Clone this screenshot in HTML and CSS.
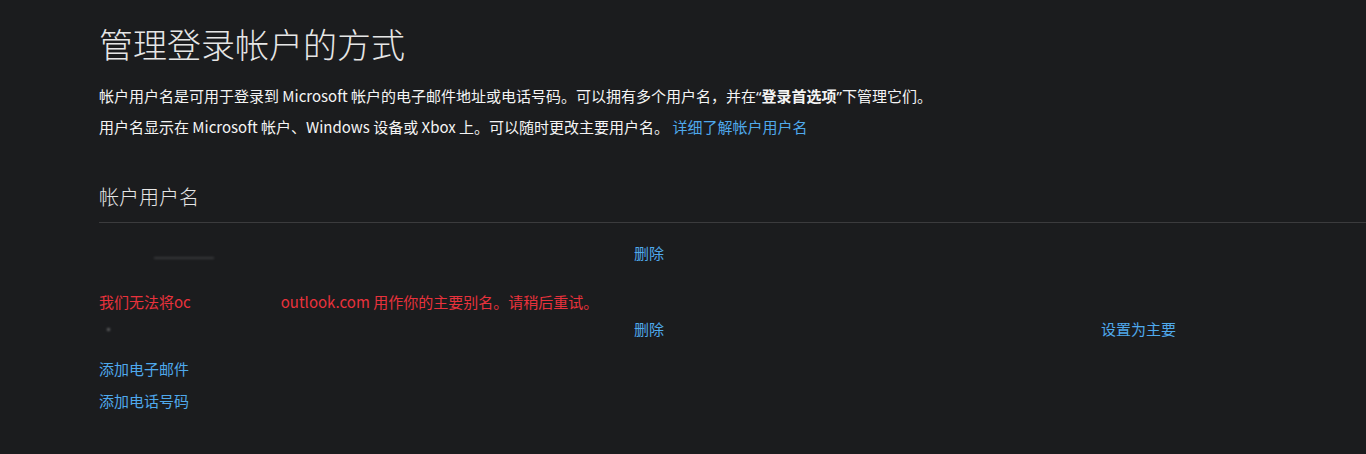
FILE: index.html
```html
<!DOCTYPE html>
<html lang="zh-CN">
<head>
<meta charset="utf-8">
<title>管理登录帐户的方式</title>
<link rel="stylesheet" href="styles.css">
</head>
<body>
<main class="page">
  <h1 class="title">管理登录帐户的方式</h1>
  <p class="intro first">帐户用户名是可用于登录到 Microsoft 帐户的电子邮件地址或电话号码。可以拥有多个用户名，并在<span class="quote">“</span><b>登录首选项</b><span class="quote">”</span>下管理它们。</p>
  <p class="intro second">用户名显示在 Microsoft 帐户、Windows 设备或 Xbox 上。可以随时更改主要用户名。 <a class="link" href="#">详细了解帐户用户名</a></p>

  <h2 class="section-title">帐户用户名</h2>

  <div class="aliases">
    <div class="alias-row row-one">
      <span class="alias-name"><span class="smudge"></span></span>
      <a class="link" href="#">删除</a>
      <span></span>
    </div>
    <div class="error">我们无法将<span class="clip">oc</span><span class="redacted"></span>outlook.com 用作你的主要别名。请稍后重试。</div>
    <div class="alias-row row-two">
      <span class="alias-name"><span class="dot"></span></span>
      <a class="link" href="#">删除</a>
      <a class="link" href="#">设置为主要</a>
    </div>
  </div>

  <div class="add-links">
    <a class="link" href="#">添加电子邮件</a>
    <a class="link" href="#">添加电话号码</a>
  </div>
</main>
</body>
</html>
```

FILE: styles.css
```css
* {
  box-sizing: border-box;
}

html, body {
  margin: 0;
  padding: 0;
  background: #1b1c1e;
}

body {
  font-family: "Noto Sans CJK SC", "Noto Sans", sans-serif;
  color: #f2f2f2;
  font-size: 15px;
  height: 454px;
  overflow: hidden;
}

.page {
  padding: 22px 0 0 99px;
}

.title {
  margin: 0;
  font-size: 34px;
  line-height: 44px;
  font-weight: 300;
  color: #e6e6e6;
  letter-spacing: 0;
}

.intro {
  margin: 0;
  font-size: 15px;
  line-height: 20px;
  color: #f4f4f4;
  white-space: nowrap;
}

.intro.first {
  margin-top: 20px;
}

.intro.second {
  margin-top: 11px;
}

.intro b {
  font-weight: 700;
}

.quote {
  font-family: "Noto Sans", "Liberation Sans", sans-serif;
}

.link {
  color: #4fa9ec;
  text-decoration: none;
  font-size: 15px;
  line-height: 20px;
}

.section-title {
  margin: 46px 0 0;
  font-size: 20px;
  line-height: 28px;
  font-weight: 300;
  color: #e6e6e6;
  padding-bottom: 11px;
  border-bottom: 1px solid #3b3b3d;
}

.aliases {
  display: flex;
  flex-direction: column;
}

.alias-row {
  display: grid;
  grid-template-columns: 535px 467px auto;
  line-height: 20px;
  height: 20px;
}

.row-one {
  margin-top: 20px;
}

.row-two {
  margin-top: 7px;
}

.alias-name {
  position: relative;
  display: block;
}

.smudge {
  position: absolute;
  left: 55px;
  top: 14px;
  width: 60px;
  height: 2px;
  background: #6a6b6d;
  filter: blur(1px);
  opacity: 0.35;
}

.dot {
  position: absolute;
  left: 8px;
  top: 9px;
  width: 3px;
  height: 3px;
  background: #5a5b5d;
  filter: blur(1px);
}

.error {
  margin-top: 29px;
  color: #e8323c;
  font-size: 15px;
  line-height: 20px;
  white-space: nowrap;
}

.clip {
  display: inline-block;
  vertical-align: top;
}

.redacted {
  display: inline-block;
  width: 90px;
}

.add-links {
  display: flex;
  flex-direction: column;
  align-items: flex-start;
  gap: 12px;
  margin-top: 20px;
}
```
